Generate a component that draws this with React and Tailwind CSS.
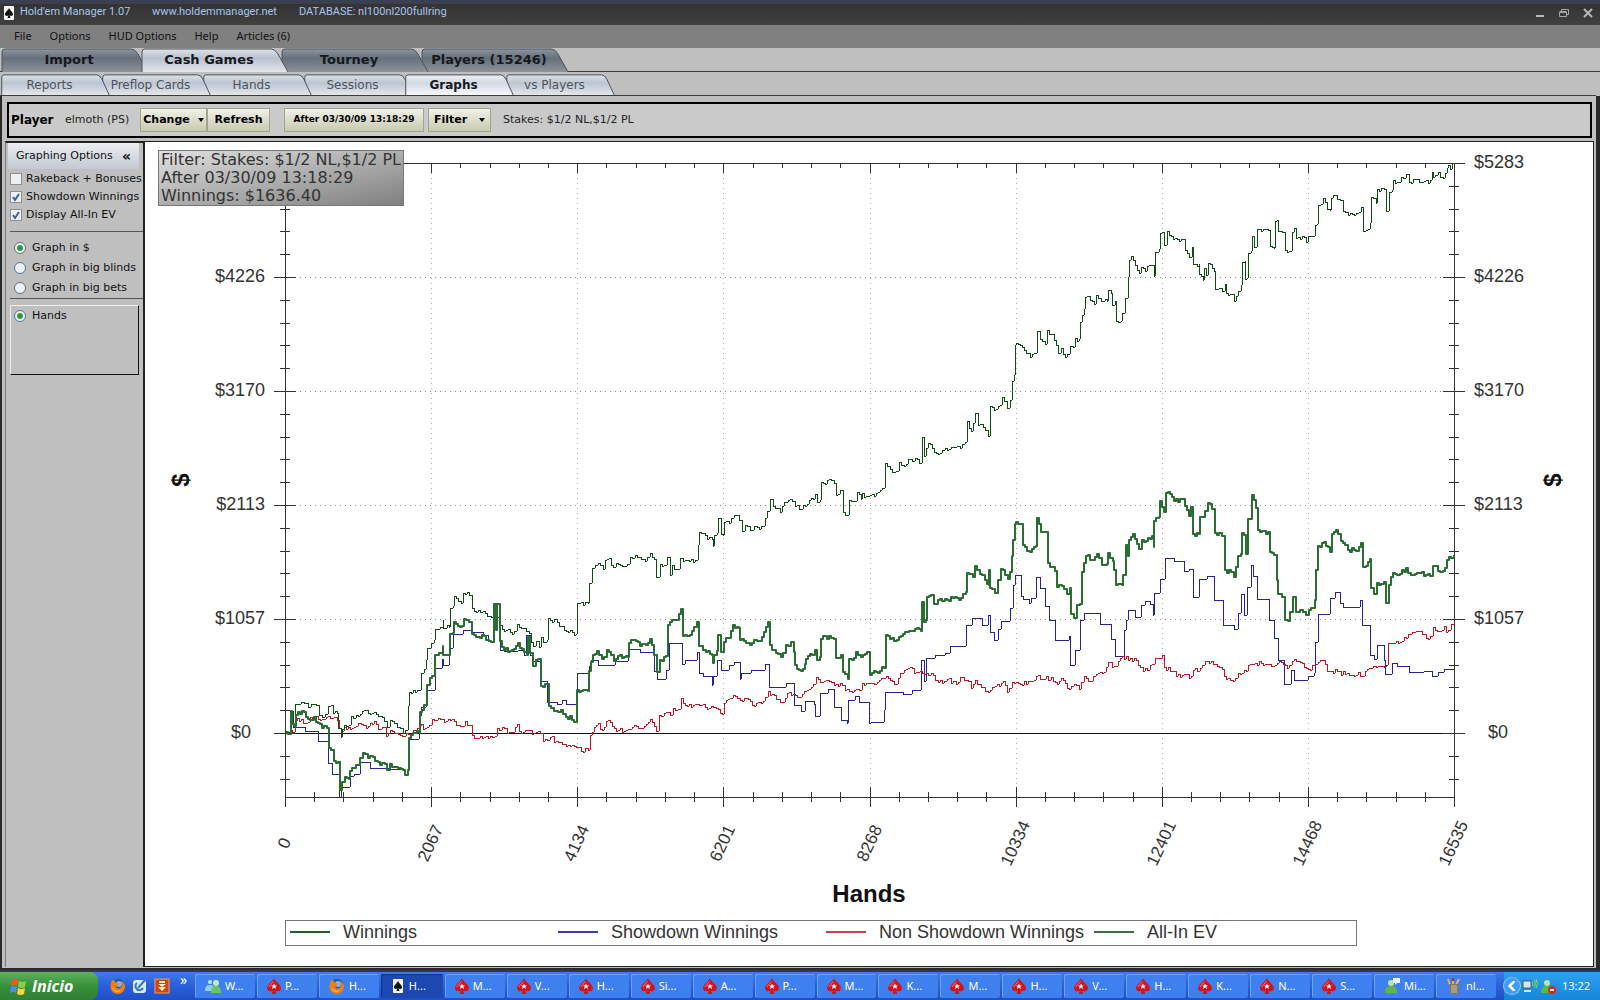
import { useState } from "react";

const PLOT = { left: 285, right: 1454, top: 163, zero: 733, bottom: 797 };
const Y_LABELS = ["$5283", "$4226", "$3170", "$2113", "$1057", "$0"];
const X_LABELS = ["0", "2067", "4134", "6201", "8268", "10334", "12401", "14468", "16535"];

const ALL_IN_EV =
  "286,732 291,732 291,711 293,711 293,725 295,725 295,704 298,704 301,702 304,703 308,707 311,704 316,705 319,710 319,715 322,717 325,714 328,714 328,706 331,705 333,709 333,713 337,713 338,728 341,737 342,729 344,725 349,725 351,716 356,715 362,711 368,713 374,712 378,716 384,721 387,727 390,720 394,723 397,727 400,728 403,733 407,730 408,706 409,692 413,690 419,690 421,673 424,669 426,660 427,648 431,643 434,640 435,629 440,627 443,620 443,628 449,627 450,608 453,606 454,596 458,601 461,603 463,593 469,595 472,608 474,611 483,611 487,616 494,617 494,604 496,604 499,606 500,625 504,631 508,629 512,634 517,624 521,628 526,631 529,633 533,646 536,641 539,647 541,637 543,642 547,640 548,618 550,620 557,622 562,626 566,631 570,630 576,634 577,603 588,603 589,583 592,568 595,565 598,563 603,569 605,560 609,558 613,567 616,563 627,564 630,557 635,555 641,559 645,561 650,553 654,559 656,577 658,577 660,564 664,565 667,557 668,557 670,575 672,565 677,569 680,558 683,561 695,560 698,545 699,532 703,533 707,539 712,539 713,546 714,535 717,533 718,518 721,520 721,534 723,535 724,522 729,523 734,515 739,520 742,531 745,525 750,530 757,527 763,526 767,511 770,499 773,506 780,512 784,502 790,499 795,506 801,509 807,504 815,494 817,502 820,500 821,482 825,484 829,479 834,483 836,495 840,490 843,512 848,515 849,500 854,501 857,492 861,499 862,493 866,496 870,495 876,493 882,488 885,463 890,469 896,471 899,462 904,466 908,459 912,461 915,458 921,463 922,437 924,437 924,456 928,443 932,448 938,454 945,448 955,447 960,448 965,442 967,421 971,431 975,413 978,425 983,427 988,436 990,406 994,410 1000,405 1002,397 1007,408 1010,400 1012,381 1014,375 1015,345 1016,343 1020,345 1030,357 1034,353 1037,331 1040,339 1045,344 1047,330 1054,340 1058,353 1061,348 1065,357 1070,346 1073,347 1075,338 1079,339 1080,322 1084,309 1085,297 1090,300 1094,304 1096,295 1101,301 1107,301 1108,290 1111,293 1112,305 1115,301 1116,321 1121,321 1122,313 1124,313 1125,298 1128,277 1129,260 1131,256 1135,265 1139,273 1141,267 1145,271 1149,265 1153,265 1154,276 1155,252 1159,249 1160,233 1162,232 1164,245 1167,231 1169,235 1175,238 1179,241 1184,239 1185,250 1189,257 1192,247 1193,264 1199,264 1199,274 1203,280 1204,268 1206,275 1208,263 1214,271 1215,289 1222,291 1225,284 1226,293 1232,294 1234,301 1238,291 1241,285 1242,262 1245,261 1245,279 1247,278 1248,253 1251,251 1252,236 1254,247 1256,247 1257,229 1268,230 1270,246 1274,248 1275,221 1277,220 1278,231 1284,232 1285,250 1289,251 1292,232 1294,228 1296,238 1304,237 1306,242 1308,236 1313,236 1315,225 1317,224 1318,205 1321,204 1323,198 1327,209 1330,210 1331,198 1335,195 1340,200 1343,211 1348,215 1354,215 1359,212 1361,207 1363,231 1366,230 1370,223 1371,197 1376,203 1377,189 1384,189 1386,211 1389,192 1392,190 1393,180 1397,182 1403,178 1406,174 1409,182 1416,179 1419,182 1424,181 1428,183 1432,172 1433,177 1438,172 1440,177 1443,178 1447,168 1448,165 1450,169 1452,163 1454,163";

const WINNINGS =
  "286,732 291,732 291,711 292,724 294,726 296,715 304,712 308,719 314,717 318,723 322,728 327,728 329,748 333,750 334,761 338,762 340,790 342,782 345,777 349,779 350,771 354,768 359,765 360,758 363,753 368,758 373,757 378,762 385,764 387,770 390,764 396,767 401,769 405,775 408,770 409,738 413,733 419,733 420,712 424,705 427,685 430,678 434,676 435,655 442,653 443,646 443,655 448,655 450,634 453,633 454,622 458,626 462,626 464,619 469,622 472,634 478,637 484,636 489,641 494,641 494,604 496,630 497,604 500,606 500,641 504,650 512,650 518,643 524,652 527,655 528,637 530,653 533,666 536,660 540,659 541,686 547,684 549,706 554,711 561,710 566,717 570,716 576,722 577,690 588,691 589,671 593,655 597,651 602,659 607,650 614,661 618,656 628,657 629,643 634,640 640,646 646,645 650,639 654,655 657,672 660,660 666,656 668,625 672,620 677,620 681,609 683,636 690,635 697,622 699,646 706,652 712,655 713,663 714,655 717,651 718,635 721,636 721,652 723,652 724,642 729,638 733,625 739,628 740,640 748,643 757,641 762,637 768,622 770,645 774,650 781,657 786,645 791,642 794,652 795,665 801,671 805,664 806,659 815,650 817,660 820,657 821,639 829,636 834,639 836,658 841,655 843,672 848,679 849,659 852,660 856,652 861,657 867,652 869,652 870,675 876,672 884,668 886,635 890,639 897,640 905,632 911,631 915,629 921,631 922,602 924,622 926,620 927,597 931,595 934,604 945,599 953,598 959,600 963,594 966,592 967,573 973,577 975,566 980,574 985,580 989,585 989,570 990,588 995,593 998,580 1001,569 1008,579 1010,572 1012,556 1013,540 1015,524 1016,522 1021,524 1023,545 1030,552 1036,546 1037,518 1041,532 1046,532 1048,563 1055,571 1057,587 1062,586 1067,594 1070,588 1071,614 1074,618 1077,605 1080,604 1082,572 1086,556 1093,560 1097,554 1102,565 1107,564 1108,553 1113,561 1114,570 1116,585 1122,585 1123,575 1126,545 1128,556 1129,540 1133,534 1139,549 1142,540 1146,541 1152,536 1154,547 1154,521 1159,517 1160,501 1164,512 1166,493 1172,497 1178,502 1184,499 1185,506 1189,516 1191,507 1193,534 1199,534 1200,517 1205,511 1208,503 1214,509 1215,533 1222,536 1225,570 1231,572 1234,577 1238,556 1241,554 1242,533 1244,535 1246,554 1248,519 1250,519 1252,495 1256,508 1258,530 1268,532 1270,552 1274,555 1277,580 1278,594 1284,597 1285,620 1288,621 1290,612 1293,597 1296,612 1303,612 1306,615 1309,610 1313,608 1315,600 1316,570 1318,546 1322,543 1324,542 1330,552 1332,534 1336,530 1341,541 1348,550 1354,550 1359,547 1361,543 1363,567 1366,566 1370,559 1371,588 1374,594 1377,583 1384,582 1386,603 1389,585 1393,573 1400,574 1406,568 1411,575 1420,573 1430,576 1433,566 1438,571 1443,571 1447,560 1451,558 1454,555";

const SHOWDOWN =
  "286,732 291,711 293,727 302,727 305,731 318,741 328,763 332,774 339,797 341,787 350,776 354,774 360,762 370,768 390,769 404,774 408,739 419,716 421,707 426,690 435,668 442,659 443,665 449,648 453,634 463,630 472,632 483,635 488,641 494,617 500,650 504,651 518,650 524,655 526,635 530,655 533,661 541,681 547,702 557,704 562,700 566,704 577,673 589,666 591,660 598,665 615,661 628,649 640,652 654,671 657,679 666,670 669,643 682,664 685,660 697,652 699,673 703,676 712,685 713,676 717,660 721,670 729,665 734,662 740,679 741,673 751,670 765,664 769,687 786,683 794,705 801,711 805,701 814,704 815,716 820,693 828,689 834,707 841,720 847,723 848,700 855,696 859,702 869,723 871,722 884,710 885,692 903,694 912,690 921,660 924,681 926,658 935,655 945,653 950,646 966,625 972,618 982,625 988,615 990,632 994,640 998,629 1001,621 1010,608 1013,585 1015,575 1021,596 1023,599 1029,603 1031,598 1036,577 1040,588 1045,606 1049,620 1055,640 1069,636 1070,665 1075,650 1080,620 1084,613 1100,624 1111,639 1115,656 1124,630 1126,620 1128,610 1135,617 1141,605 1145,601 1150,604 1153,615 1154,593 1160,579 1165,558 1174,561 1184,571 1189,569 1193,597 1199,579 1207,576 1214,600 1223,625 1234,629 1238,613 1241,594 1244,615 1247,587 1251,565 1253,576 1257,599 1269,620 1274,638 1278,660 1284,684 1291,670 1294,680 1308,676 1314,673 1315,642 1318,614 1330,598 1335,592 1340,603 1343,607 1360,600 1362,625 1370,655 1374,659 1377,645 1384,660 1385,674 1392,663 1397,666 1409,672 1424,671 1432,676 1438,672 1444,669 1454,669";

const NON_SHOWDOWN =
  "286,732 295,732 295,721 301,719 306,723 310,717 322,719 330,718 337,720 341,731 344,727 354,727 361,724 366,728 374,721 378,729 384,727 386,736 390,730 400,735 408,734 413,730 419,726 427,727 432,719 438,718 446,721 452,719 460,726 465,721 470,725 472,735 482,738 490,736 495,736 497,728 502,727 507,733 513,732 517,724 521,733 527,730 532,734 540,733 543,741 550,737 558,742 566,746 572,745 581,751 588,750 590,735 598,723 602,730 608,720 614,728 624,731 634,725 640,728 650,719 656,731 659,715 664,713 670,715 673,708 678,709 681,698 685,705 697,704 705,707 716,708 722,714 724,703 733,695 740,700 748,699 754,706 761,703 768,691 776,699 783,702 787,693 795,695 800,697 807,690 811,687 816,677 822,682 829,681 834,685 840,683 845,690 852,692 859,690 862,683 870,683 877,682 886,676 890,680 896,684 900,673 908,668 916,672 924,674 931,673 938,682 947,679 956,684 962,677 968,681 971,688 975,680 981,687 988,692 995,686 1003,681 1007,692 1012,682 1020,684 1030,681 1036,676 1044,679 1051,677 1057,684 1061,678 1067,688 1074,684 1079,689 1084,676 1091,681 1096,674 1104,672 1108,662 1114,666 1122,656 1130,658 1136,660 1143,671 1150,665 1155,658 1162,655 1164,667 1172,671 1180,677 1186,674 1189,678 1193,670 1200,668 1205,661 1213,664 1222,669 1226,679 1233,681 1238,673 1246,671 1248,665 1255,663 1265,664 1275,665 1281,662 1287,668 1292,661 1302,663 1308,669 1314,665 1323,660 1327,671 1337,671 1345,674 1352,675 1358,672 1363,676 1369,668 1376,667 1386,665 1388,643 1396,641 1400,642 1404,637 1410,634 1416,631 1422,634 1428,639 1433,627 1440,631 1444,626 1446,632 1451,624 1454,622";

function parsePoints(series) {
  return series.split(" ").map((pair) => pair.split(",").map(Number));
}

// Blinds and small pots: a little up-and-down movement between the bigger swings.
function roughen(series) {
  const points = parsePoints(series);
  let seed = 7;
  let d = `M${points[0][0]} ${points[0][1]}`;
  for (let i = 1; i < points.length; i++) {
    const [x0, y0] = points[i - 1];
    const [x1, y1] = points[i];
    for (let x = x0 + 2; x < x1 - 1; x += 2) {
      seed = (seed * 1103515245 + 12345) % 2147483648;
      const noise = (seed >> 12) % 5 - 2;
      const y = Math.round(y0 + ((y1 - y0) * (x - x0)) / (x1 - x0)) + noise;
      d += `H${x}V${y}`;
    }
    d += `H${x1}V${y1}`;
  }
  return d;
}

function stepped(series) {
  return parsePoints(series)
    .map(([x, y], i) => (i === 0 ? `M${x} ${y}` : `H${x}V${y}`))
    .join("");
}

const SERIES = [
  { name: "Showdown Winnings", d: stepped(SHOWDOWN), color: "#23239a", width: 1 },
  { name: "Non Showdown Winnings", d: roughen(NON_SHOWDOWN), color: "#c4161c", width: 1 },
  { name: "All-In EV", d: roughen(ALL_IN_EV), color: "#0f4d14", width: 1 },
  { name: "Winnings", d: roughen(WINNINGS), color: "#2b6e33", width: 2 },
];

const LEGEND = [
  { name: "Winnings", color: "#1d6426" },
  { name: "Showdown Winnings", color: "#3a3aa8" },
  { name: "Non Showdown Winnings", color: "#c4474c" },
  { name: "All-In EV", color: "#3d6e42" },
];

const rowY = (i) => Math.round(PLOT.top + ((PLOT.zero - PLOT.top) * i) / 5);
const colX = (i) => Math.round(PLOT.left + ((PLOT.right - PLOT.left) * i) / 8);

function Axes() {
  const yTicks = [];
  for (let i = 0; i <= 27; i++) {
    const y = Math.round(PLOT.top + ((PLOT.zero - PLOT.top) * i) / 25);
    yTicks.push({ y, half: i % 5 === 0 ? 11 : 5 });
  }
  const xTicks = [];
  for (let i = 0; i <= 40; i++) {
    const x = Math.round(PLOT.left + ((PLOT.right - PLOT.left) * i) / 40);
    xTicks.push({ x, half: i % 5 === 0 ? 10 : 5 });
  }
  return (
    <g stroke="#333" shapeRendering="crispEdges" fill="none">
      <g stroke="#b0b0b0" strokeDasharray="1 4">
        {[1, 2, 3, 4].map((i) => (
          <path key={i} d={`M${PLOT.left} ${rowY(i)}H${PLOT.right}`} stroke="#8a8a8a" />
        ))}
        {[1, 2, 3, 4, 5, 6, 7].map((i) => (
          <path key={i} d={`M${colX(i)} ${PLOT.top}V${PLOT.bottom}`} />
        ))}
      </g>
      <path d={`M${PLOT.left} ${PLOT.top}H${PLOT.right}V${PLOT.bottom}H${PLOT.left}Z`} />
      <path d={`M${PLOT.left} ${PLOT.zero}H${PLOT.right}`} stroke="#111" />
      {yTicks.map(({ y, half }) => (
        <path key={y} d={`M${PLOT.left - half} ${y}h${half * 2}M${PLOT.right - half} ${y}h${half * 2}`} />
      ))}
      {xTicks.map(({ x, half }) => (
        <path key={x} d={`M${x} ${PLOT.bottom - half}v${half * 2}M${x} ${PLOT.top}v${half}`} />
      ))}
    </g>
  );
}

function WinningsChart() {
  return (
    <svg viewBox="145 142 1448 824" className="h-full w-full font-['Liberation_Sans',sans-serif]" role="img" aria-label="Winnings by hands">
      <Axes />
      {SERIES.map((s) => (
        <path key={s.name} d={s.d} fill="none" stroke={s.color} strokeWidth={s.width} strokeLinejoin="round" shapeRendering={s.width === 1 ? "crispEdges" : "auto"} />
      ))}
      <g fontSize="18" fill="#333">
        {Y_LABELS.map((label, i) => (
          <g key={label}>
            {i > 0 && <text x={label === "$0" ? 251 : 265} y={rowY(i) + 5} textAnchor="end">{label}</text>}
            <text x={label === "$0" ? 1488 : 1474} y={rowY(i) + 5}>{label}</text>
          </g>
        ))}
      </g>
      <g fontSize="17" fill="#333">
        {X_LABELS.map((label, i) => (
          <text key={label} x="0" y="6" textAnchor="middle" transform={`translate(${colX(i) - 1} 843) rotate(-65)`}>
            {label}
          </text>
        ))}
      </g>
      <g fontSize="24" fontWeight="bold" fill="#111" textAnchor="middle">
        <text x="869" y="902">Hands</text>
        <text x="0" y="8" transform="translate(181 480) rotate(-90)">$</text>
        <text x="0" y="8" transform="translate(1553 480) rotate(-90)">$</text>
      </g>
      <rect x="285" y="920" width="1071" height="25" fill="none" stroke="#777" shapeRendering="crispEdges" />
      {LEGEND.map((item, i) => (
        <g key={item.name}>
          <path d={`M${290 + i * 268} 932h40`} stroke={item.color} strokeWidth="2" shapeRendering="crispEdges" />
          <text x={343 + i * 268} y="938" fontSize="18" fill="#333">{item.name}</text>
        </g>
      ))}
    </svg>
  );
}

function SpadeCard({ className }) {
  return (
    <svg viewBox="0 0 10 14" className={className} aria-hidden="true">
      <rect width="10" height="14" rx="1" fill="#f4f4f4" />
      <path d="M5 2C4 4.500 1 6 1 8.300c0 1.800 2.300 2.200 3.400 1L3.500 12h3l-.9-2.700c1.100 1.200 3.400.8 3.400-1C9 6 6 4.500 5 2z" fill="#111" />
    </svg>
  );
}

function PokerStarIcon() {
  return (
    <svg viewBox="0 0 14 16" className="h-4 w-3.5 shrink-0" aria-hidden="true">
      <path d="M7 0C5.500 4 0 6.500 0 10.200c0 3 3.700 4 5.900 2.200L4.600 16h4.800l-1.300-3.600C10.300 14.200 14 13.200 14 10.200 14 6.500 8.500 4 7 0z" fill="#d3141f" />
      <path d="M2 9c.5-2 3-3.500 4.500-5.500" stroke="#f37c84" fill="none" />
      <path d="M7 5.500l.9 2h2.100l-1.700 1.300.7 2.100-2-1.300-2 1.300.7-2.100L4 7.500h2.100z" fill="#fff" />
    </svg>
  );
}

function FirefoxIcon() {
  return (
    <svg viewBox="0 0 16 16" className="size-4 shrink-0" aria-hidden="true">
      <circle cx="8" cy="8" r="7" fill="#27549c" />
      <circle cx="9" cy="6" r="3" fill="#7fb4e6" />
      <path d="M2 2c2 0 3 1 4 3l3 1-3 3c1 2 5 2 6-1 1-2 0-4-1-5 3 1 4.500 4 4 6.500C14.500 13 12 16 8 16c-5 0-8-4-7.500-8.500C.7 5 1.500 3.500 2 2z" fill="#ef7d16" />
      <path d="M2 8c1 4 5 6 9 4-2 3-8 3-9-4z" fill="#fbc447" />
    </svg>
  );
}

function BuddyIcon({ badge }) {
  return (
    <svg viewBox="0 0 16 16" className="size-4 shrink-0" aria-hidden="true">
      {badge === "pair" ? (
        <>
          <circle cx="5" cy="4" r="2" fill="#bfe6fb" />
          <path d="M0 13c0-5 2-6 5-6s4 1 4 6z" fill="#8fd0f2" />
          <circle cx="11" cy="5" r="3" fill="#c2efb0" />
          <path d="M6 15c0-5 2-7 5-7s5 2 5 7z" fill="#6cc45a" />
        </>
      ) : (
        <>
          <circle cx="7" cy="5" r="3" fill="#b8ea9c" />
          <path d="M1 15c0-5 2-7 6-7s6 2 6 7z" fill="#5cb84a" />
        </>
      )}
      {badge === "busy" && <circle cx="12" cy="12" r="4" fill="#d8261c" />}
      {badge === "busy" && <path d="M10 12h4" stroke="#fff" strokeWidth="2" />}
      {badge === "chat" && <path d="M9 0h7v5h-3l-2 2V5H9z" fill="#f0f6ff" />}
    </svg>
  );
}

function MugIcon() {
  return (
    <svg viewBox="0 0 16 16" className="size-4 shrink-0" aria-hidden="true">
      <path d="M4 7L2 1M7 7V1M10 7l3-6" stroke="#d9b36a" strokeWidth="2" />
      <path d="M7 0v3" stroke="#c22" strokeWidth="2" />
      <path d="M3 6h10l-1 10H5z" fill="#8d7350" />
      <path d="M6 7v8M8 7v8M10 7v8" stroke="#c9c2b0" />
    </svg>
  );
}

const TASK_ICONS = {
  star: <PokerStarIcon />,
  fox: <FirefoxIcon />,
  pair: <BuddyIcon badge="pair" />,
  chat: <BuddyIcon badge="chat" />,
  card: <SpadeCard className="h-3.5 w-2.5 shrink-0" />,
  mug: <MugIcon />,
};

const TASKS = [
  ["pair", "W..."], ["star", "P..."], ["fox", "H..."], ["card", "H..."], ["star", "M..."], ["star", "V..."], ["star", "H..."],
  ["star", "Si..."], ["star", "A..."], ["star", "P..."], ["star", "M..."], ["star", "K..."], ["star", "M..."], ["star", "H..."],
  ["star", "V..."], ["star", "H..."], ["star", "K..."], ["star", "N..."], ["star", "S..."], ["chat", "Mi..."], ["mug", "nl..."],
];

function TitleBar() {
  return (
    <header className="flex h-[25px] items-center border-t-4 border-[#3c3f52] bg-linear-to-b from-[#333] to-[#404040] pb-1 pl-1 text-[11px] text-[#a9c4ee] font-[Roboto,sans-serif]">
      <SpadeCard className="h-3.5 w-2.5" />
      <h1 className="ml-1.5 w-[132px]">Hold'em Manager 1.07</h1>
      <a href="#site" className="w-[147px]">www.holdemmanager.net</a>
      <span>DATABASE: nl100nl200fullring</span>
      <div className="ml-auto flex items-center gap-3 pr-1.5">
        <button type="button" aria-label="Minimize" className="flex size-3 items-end p-0.5">
          <span className="h-0.5 w-full bg-[#b8b8b8]" />
        </button>
        <button type="button" aria-label="Restore">
          <svg viewBox="0 0 12 12" className="size-3" fill="none" stroke="#a8a8a8" aria-hidden="true">
            <path d="M3.500 4V2.500h7v5H9M1.500 5.500h7v4h-7zM1.500 4.500h7" />
          </svg>
        </button>
        <button type="button" aria-label="Close">
          <svg viewBox="0 0 12 12" className="size-3" stroke="#b8b8b8" strokeWidth="2" aria-hidden="true">
            <path d="M2 2l8 8M10 2l-8 8" />
          </svg>
        </button>
      </div>
    </header>
  );
}

function TabShape({ active, dark }) {
  const id = `tab-${dark ? "dark" : "light"}-${active ? "on" : "off"}`;
  const colors = dark
    ? active ? ["#dfe3e8", "#b9c1ce", "#e3e6ea"] : ["#8d959e", "#66707b", "#8b939b"]
    : active ? ["#eef0f4", "#d3d9e3", "#f6f7f9"] : ["#dfe3e8", "#bcc5d2", "#e4e6ea"];
  return (
    <svg viewBox="0 0 148 24" preserveAspectRatio="none" className="absolute inset-y-0 left-0 -z-10 h-full w-[calc(100%+8px)]" aria-hidden="true">
      <defs>
        <linearGradient id={id} x1="0" y1="0" x2="0" y2="1">
          <stop offset="0" stopColor={colors[0]} />
          <stop offset="0.4" stopColor={colors[1]} />
          <stop offset="1" stopColor={colors[2]} />
        </linearGradient>
      </defs>
      <path d="M1 24V4Q1 1 4 1H130Q134 1 137 6L147 24" fill={`url(#${id})`} stroke="#4b535c" vectorEffect="non-scaling-stroke" />
    </svg>
  );
}

// Each tab's slanted edge lies over its right neighbour, and the active one over both.
function Tab({ label, active, dark, order, onPick }) {
  return (
    <button
      type="button"
      role="tab"
      aria-selected={active}
      onClick={onPick}
      style={{ zIndex: active ? 20 : 10 - order }}
      className={
        dark
          ? "relative isolate h-6 w-[140px] pr-1 text-[13px] font-bold text-[#15181c]"
          : active
            ? "relative isolate h-[21px] w-[101px] pr-1 text-xs font-bold text-[#15181c]"
            : "relative isolate h-[21px] w-[101px] pr-1 text-xs text-[#4c535c]"
      }
    >
      <TabShape active={active} dark={dark} />
      {label}
    </button>
  );
}

function ToolButton({ children, className = "" }) {
  return (
    <button
      type="button"
      className={`flex h-6 items-center justify-center border border-[#a2a48c] bg-linear-to-b from-[#f0f1e8] to-[#c8cab0] font-bold text-black ${className}`}
    >
      {children}
    </button>
  );
}

function Caret() {
  return <span className="border-x-[3px] border-t-4 border-x-transparent border-t-black" />;
}

function Option({ type, label, checked, onChange, name }) {
  const box = type === "radio" ? "size-3 rounded-full border border-[#5a7489]" : "size-3 border border-[#8a9096]";
  return (
    <label className={`flex items-center whitespace-nowrap text-[11px] leading-3 ${type === "radio" ? "gap-1.5" : "gap-1"}`}>
      <span className="relative flex size-3 items-center justify-center">
        <input type={type} name={name} checked={checked} onChange={onChange} className={`appearance-none bg-[#eef0f2] ${box}`} />
        {checked && type === "radio" && <span className="pointer-events-none absolute size-1.5 rounded-full bg-[#2f9a3c]" />}
        {checked && type === "checkbox" && (
          <svg viewBox="0 0 12 12" className="pointer-events-none absolute size-3" fill="none" stroke="#44618c" strokeWidth="2" aria-hidden="true">
            <path d="M3 6l2 3 4-6" />
          </svg>
        )}
      </span>
      {label}
    </label>
  );
}

function GraphingOptions() {
  const [shown, setShown] = useState({ "Rakeback + Bonuses": false, "Showdown Winnings": true, "Display All-In EV": true });
  const [unit, setUnit] = useState("Graph in $");
  return (
    <aside className="w-[140px] shrink-0 border-t-2 border-l border-r-2 border-[#222] border-l-[#777] bg-[#bfbfbf] text-[#111]">
      <h2 className="ml-0.5 mr-1 flex h-[26px] items-center justify-between bg-linear-to-b from-[#eceef2] to-[#c3c8d2] pl-2 pr-2 text-[11px]">
        Graphing Options
        <button type="button" aria-label="Collapse" className="text-sm font-bold">«</button>
      </h2>
      <div className="flex flex-col gap-1.5 pl-1 pt-1">
        {Object.keys(shown).map((label) => (
          <Option key={label} type="checkbox" label={label} checked={shown[label]} onChange={() => setShown({ ...shown, [label]: !shown[label] })} />
        ))}
      </div>
      <div className="ml-1 mt-2.5 flex flex-col gap-2 border-y border-[#555] pb-1 pl-1 pt-2.5">
        {["Graph in $", "Graph in big blinds", "Graph in big bets"].map((label) => (
          <Option key={label} type="radio" name="unit" label={label} checked={unit === label} onChange={() => setUnit(label)} />
        ))}
      </div>
      <div className="ml-1 mr-1 mt-1.5 h-[70px] border border-b-[#111] border-l-[#eee] border-r-[#111] border-t-[#eee] pl-[3px] pt-1">
        <Option type="radio" name="axis" label="Hands" checked onChange={() => {}} />
      </div>
    </aside>
  );
}

function Taskbar() {
  return (
    <footer className="flex h-7 items-stretch bg-linear-to-b from-[#3f7be8] via-[#2a5fdc] to-[#1f4fc4] text-[11px] text-white font-['Noto_Sans',sans-serif]">
      <button type="button" className="flex w-[98px] items-center gap-1 rounded-r-lg bg-linear-to-b from-[#5fb35c] via-[#37903a] to-[#2e7f33] pl-2.5 text-base font-bold italic font-['Open_Sans',sans-serif]">
        <svg viewBox="0 0 18 18" className="size-[18px]" aria-hidden="true">
          <path d="M2 3q3-2 6 0L7 9Q4 7 1 9z" fill="#ee5a24" />
          <path d="M9 4q4 2 7 0l-1 6q-3 2-7 0z" fill="#8ccf3c" />
          <path d="M1 10q3-2 6 0l-1 6q-3-2-6 0z" fill="#4a8df0" />
          <path d="M8 11q3 2 7 0l-1 6q-4 2-7 0z" fill="#fbd13c" />
        </svg>
        Inicio
      </button>
      <nav aria-label="Quick launch" className="flex w-[97px] items-center gap-1.5 pl-3">
        <button type="button" aria-label="Firefox"><FirefoxIcon /></button>
        <button type="button" aria-label="Show desktop">
          <svg viewBox="0 0 16 16" className="size-4" aria-hidden="true">
            <rect x="1" y="2" width="13" height="13" rx="3" fill="#d8ecfb" />
            <path d="M5 5a4 4 0 1 0 6 5M6 10l7-8" stroke="#3a78b8" strokeWidth="2" fill="none" />
          </svg>
        </button>
        <button type="button" aria-label="Downloader">
          <svg viewBox="0 0 16 16" className="size-4" aria-hidden="true">
            <rect x="1" y="1" width="14" height="14" fill="#d8401c" stroke="#f6a04a" />
            <path d="M5 3h6v2H5zM4 6h8L8 9zM4 9h8l-4 4z" fill="#fff3c0" />
          </svg>
        </button>
        <button type="button" aria-label="More" className="-mt-3 ml-1 text-sm">»</button>
      </nav>
      <div className="flex flex-1 py-0.5">
        {TASKS.map(([icon, label], i) => (
          <button
            key={i}
            type="button"
            className={
              icon === "card"
                ? "mr-0.5 flex min-w-0 flex-1 items-center gap-1.5 rounded-xs bg-[#1c48b0] pl-3 shadow-[inset_1px_1px_1px_#12348c]"
                : "mr-0.5 flex min-w-0 flex-1 items-center gap-1 rounded-xs bg-[#3f80f0] pl-2.5 shadow-[inset_1px_1px_0_#6ba0f8]"
            }
          >
            {TASK_ICONS[icon]}
            {label}
          </button>
        ))}
      </div>
      <div className="ml-1.5 flex w-[96px] items-center gap-0.5 bg-linear-to-b from-[#2fa0f0] to-[#1585d8]">
        <button type="button" aria-label="Show hidden icons" className="flex size-4 items-center justify-center rounded-full bg-[#3f9cf0] shadow-[0_0_0_1px_#8cc8fa]">
          <svg viewBox="0 0 8 8" className="size-2.5" fill="none" stroke="#fff" strokeWidth="2" aria-hidden="true">
            <path d="M6 0L2 4l4 4" />
          </svg>
        </button>
        <svg viewBox="0 0 16 16" className="size-4" aria-hidden="true">
          <rect x="1" y="3" width="8" height="7" fill="#d8e4f0" stroke="#4a5a70" />
          <path d="M2 13h7" stroke="#d8e4f0" strokeWidth="2" />
          <path d="M10 4q2 2 0 4M12 2q3 4 0 7M14 1q3 5 0 9" stroke="#7fe04a" fill="none" />
        </svg>
        <BuddyIcon badge="busy" />
        <time className="ml-1">13:22</time>
      </div>
    </footer>
  );
}

export default function App() {
  const [tab, setTab] = useState("Cash Games");
  const [view, setView] = useState("Graphs");
  return (
    <div className="flex h-screen flex-col overflow-hidden bg-[#bfbfbf] font-['DejaVu_Sans',Verdana,sans-serif]">
      <TitleBar />
      <nav aria-label="Menu" className="flex h-[23px] items-center gap-[18px] bg-[#808080] pl-3.5 text-[11px] text-[#111] font-['Noto_Sans',sans-serif]">
        {["File", "Options", "HUD Options", "Help", "Articles (6)"].map((item) => (
          <button key={item} type="button">{item}</button>
        ))}
      </nav>
      <div role="tablist" className="flex h-6 border-b border-[#3a3f3a] pl-px">
        {["Import", "Cash Games", "Tourney", "Players (15246)"].map((label, i) => (
          <Tab key={label} dark order={i} label={label} active={tab === label} onPick={() => setTab(label)} />
        ))}
      </div>
      <div role="tablist" className="mr-1 flex h-6 items-end border-b border-[#3a3f3a] pl-px">
        {["Reports", "Preflop Cards", "Hands", "Sessions", "Graphs", "vs Players"].map((label, i) => (
          <Tab key={label} order={i} label={label} active={view === label} onPick={() => setView(label)} />
        ))}
      </div>
      <main className="flex min-h-0 flex-1 flex-col border-b-2 border-l-2 border-r-4 border-[#2a2a2a] pb-px pl-[3px] pr-0.5 pt-1.5">
        <div className="ml-0.5 mr-0.5 flex h-9 shrink-0 items-center border-2 border-black bg-[#cacaca] pl-0.5 text-[11px] text-[#222]">
          <h2 className="w-[54px] text-xs font-bold text-black">Player</h2>
          <span className="w-[75px]">elmoth (PS)</span>
          <ToolButton className="w-[67px] gap-2 text-[11px]">Change <Caret /></ToolButton>
          <ToolButton className="w-[63px] text-[11px]">Refresh</ToolButton>
          <ToolButton className="ml-3.5 w-[140px] text-[9px]">After 03/30/09 13:18:29</ToolButton>
          <ToolButton className="ml-1 w-[63px] gap-3 text-[11px]">Filter <Caret /></ToolButton>
          <span className="ml-3">Stakes: $1/2 NL,$1/2 PL</span>
        </div>
        <div className="mt-[3px] flex min-h-0 flex-1">
          <GraphingOptions />
          <section className="relative min-w-0 flex-1 border-b border-r border-t border-[#222] bg-white">
            <WinningsChart />
            <div className="absolute left-[13px] top-2 border border-[#777] bg-linear-to-br from-[#e0e0e0] to-[#808080] px-0.5 text-base leading-[18px] whitespace-nowrap text-[#333]">
              <p>Filter: Stakes: $1/2 NL,$1/2 PL</p>
              <p>After 03/30/09 13:18:29</p>
              <p>Winnings: $1636.40</p>
            </div>
          </section>
        </div>
      </main>
      <div className="h-0.5 shrink-0 bg-[#33374f]" />
      <Taskbar />
    </div>
  );
}
